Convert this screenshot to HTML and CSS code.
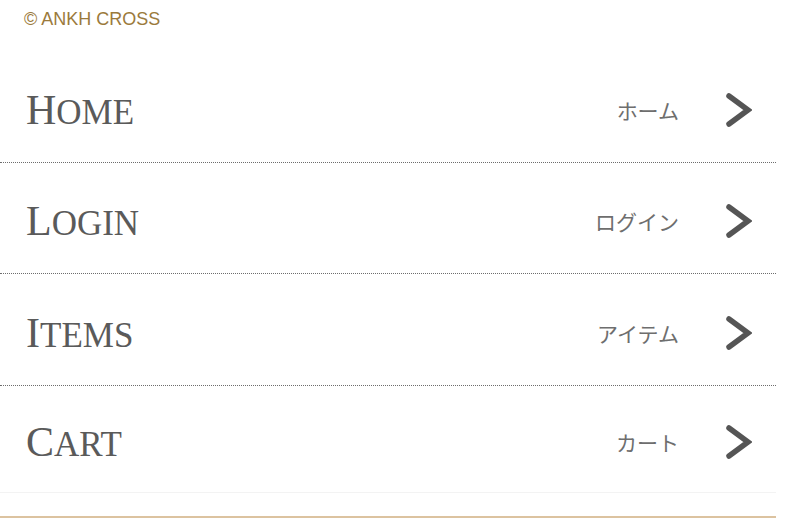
FILE: index.html
```html
<!DOCTYPE html>
<html lang="ja">
<head>
<meta charset="utf-8">
<title>ANKH CROSS Menu</title>
<link rel="stylesheet" href="styles.css">
</head>
<body>
<div class="page">
  <header class="copy">© ANKH CROSS</header>
  <nav class="menu">
    <a class="row r1" href="#"><span class="en"><span class="cap">H</span><span class="sc">OME</span></span><span class="right"><span class="ja">ホーム</span><svg class="chev" viewBox="0 0 26 34"><polyline points="3,3 22,17 3,31"/></svg></span></a>
    <a class="row r2" href="#"><span class="en"><span class="cap">L</span><span class="sc">OGIN</span></span><span class="right"><span class="ja">ログイン</span><svg class="chev" viewBox="0 0 26 34"><polyline points="3,3 22,17 3,31"/></svg></span></a>
    <a class="row r3" href="#"><span class="en"><span class="cap">I</span><span class="sc">TEMS</span></span><span class="right"><span class="ja">アイテム</span><svg class="chev" viewBox="0 0 26 34"><polyline points="3,3 22,17 3,31"/></svg></span></a>
    <a class="row last" href="#"><span class="en"><span class="cap">C</span><span class="sc">ART</span></span><span class="right"><span class="ja">カート</span><svg class="chev" viewBox="0 0 26 34"><polyline points="3,3 22,17 3,31"/></svg></span></a>
  </nav>
  <div class="footline"></div>
</div>
</body>
</html>
```
FILE: styles.css
```css
html, body {
  margin: 0;
  padding: 0;
  background: #ffffff;
}
.page {
  width: 776px;
}
.copy {
  height: 51px;
  box-sizing: border-box;
  padding: 10px 0 0 24px;
  font-family: "Liberation Sans", Arial, sans-serif;
  font-size: 18px;
  line-height: 1;
  color: #9b7a3c;
}
.menu {
  display: flex;
  flex-direction: column;
}
.row {
  display: flex;
  align-items: center;
  justify-content: space-between;
  height: 112px;
  box-sizing: border-box;
  padding: 6px 24px 0 26px;
  border-bottom: 1px dotted #6d6d6d;
  text-decoration: none;
}
.row.r2 {
  height: 111px;
}
.row.last {
  height: 107px;
  border-bottom: 1px solid #f3f3f3;
}
.en {
  font-family: "Liberation Serif", "Times New Roman", serif;
  color: #5a5a5a;
  line-height: 1;
  white-space: nowrap;
}
.cap {
  font-size: 42px;
}
.sc {
  font-size: 35px;
}
.right {
  display: flex;
  align-items: center;
  gap: 47px;
}
.ja {
  font-family: "Noto Sans CJK JP", "Noto Sans", sans-serif;
  font-size: 21px;
  font-weight: 400;
  color: #6e6e6e;
}
.chev {
  width: 26px;
  height: 34px;
  fill: none;
  stroke: #555555;
  stroke-width: 5.5;
  stroke-linecap: round;
  stroke-linejoin: miter;
}
.footline {
  height: 23px;
  border-bottom: 2px solid #dcc3a0;
}
```
